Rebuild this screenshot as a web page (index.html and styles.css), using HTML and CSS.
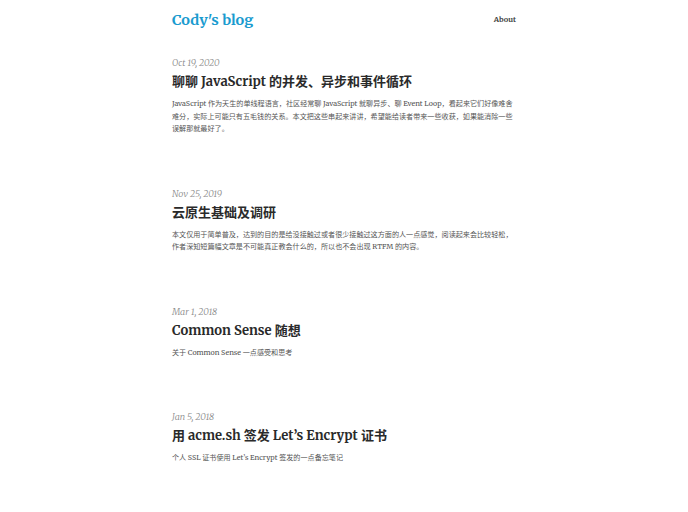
FILE: index.html
```html
<!DOCTYPE html>
<html lang="zh-CN">
<head>
<meta charset="utf-8">
<title>Cody's blog</title>
<link rel="stylesheet" href="styles.css">
</head>
<body>
<div class="wrap">
  <header class="site-header">
    <a class="site-title" href="#">Cody's blog</a>
    <nav class="site-nav"><a href="#">About</a></nav>
  </header>
  <main class="posts">
    <article class="post">
      <div class="date">Oct 19, 2020</div>
      <h2 class="title">聊聊 JavaScript 的并发、异步和事件循环</h2>
      <p class="excerpt">JavaScript 作为天生的单线程语言，社区经常聊 JavaScript 就聊异步、聊 Event Loop，看起来它们好像难舍难分，实际上可能只有五毛钱的关系。本文把这些串起来讲讲，希望能给读者带来一些收获，如果能消除一些误解那就最好了。</p>
    </article>
    <article class="post">
      <div class="date">Nov 25, 2019</div>
      <h2 class="title">云原生基础及调研</h2>
      <p class="excerpt">本文仅用于简单普及，达到的目的是给没接触过或者很少接触过这方面的人一点感觉，阅读起来会比较轻松，作者深知短篇幅文章是不可能真正教会什么的，所以也不会出现 RTFM 的内容。</p>
    </article>
    <article class="post">
      <div class="date">Mar 1, 2018</div>
      <h2 class="title">Common Sense 随想</h2>
      <p class="excerpt">关于 Common Sense 一点感受和思考</p>
    </article>
    <article class="post">
      <div class="date">Jan 5, 2018</div>
      <h2 class="title">用 acme.sh 签发 Let’s Encrypt 证书</h2>
      <p class="excerpt">个人 SSL 证书使用 Let’s Encrypt 签发的一点备忘笔记</p>
    </article>
  </main>
</div>
</body>
</html>
```
FILE: styles.css
```css
html, body {
  margin: 0;
  padding: 0;
  background: #fff;
}
body {
  font-family: Merriweather, "DejaVu Serif", "Noto Sans CJK SC", serif;
  color: #333;
}
a { text-decoration: none; }
.wrap {
  width: 344px;
  margin: 0 auto;
}
.site-header {
  display: flex;
  justify-content: space-between;
  align-items: center;
  padding-top: 8px;
  height: 24px;
}
.site-title {
  color: #1a9bcf;
  font-size: 14.5px;
  font-weight: bold;
  line-height: 24px;
}
.site-nav {
  display: flex;
  align-items: center;
}
.site-nav a {
  color: #444;
  font-size: 7.5px;
  line-height: 10px;
  font-weight: bold;
}
.posts {
  padding-top: 24px;
}
.post + .post {
  margin-top: 51px;
}
.date {
  font-style: italic;
  font-weight: 300;
  font-size: 9px;
  line-height: 14px;
  color: #888;
}
.title {
  margin: 2px 0 0;
  font-size: 13px;
  line-height: 20px;
  font-weight: bold;
  color: #2a2a2a;
}
.excerpt {
  margin: 6px 0 0;
  font-size: 7.1px;
  line-height: 12.5px;
  color: #555;
}
```
